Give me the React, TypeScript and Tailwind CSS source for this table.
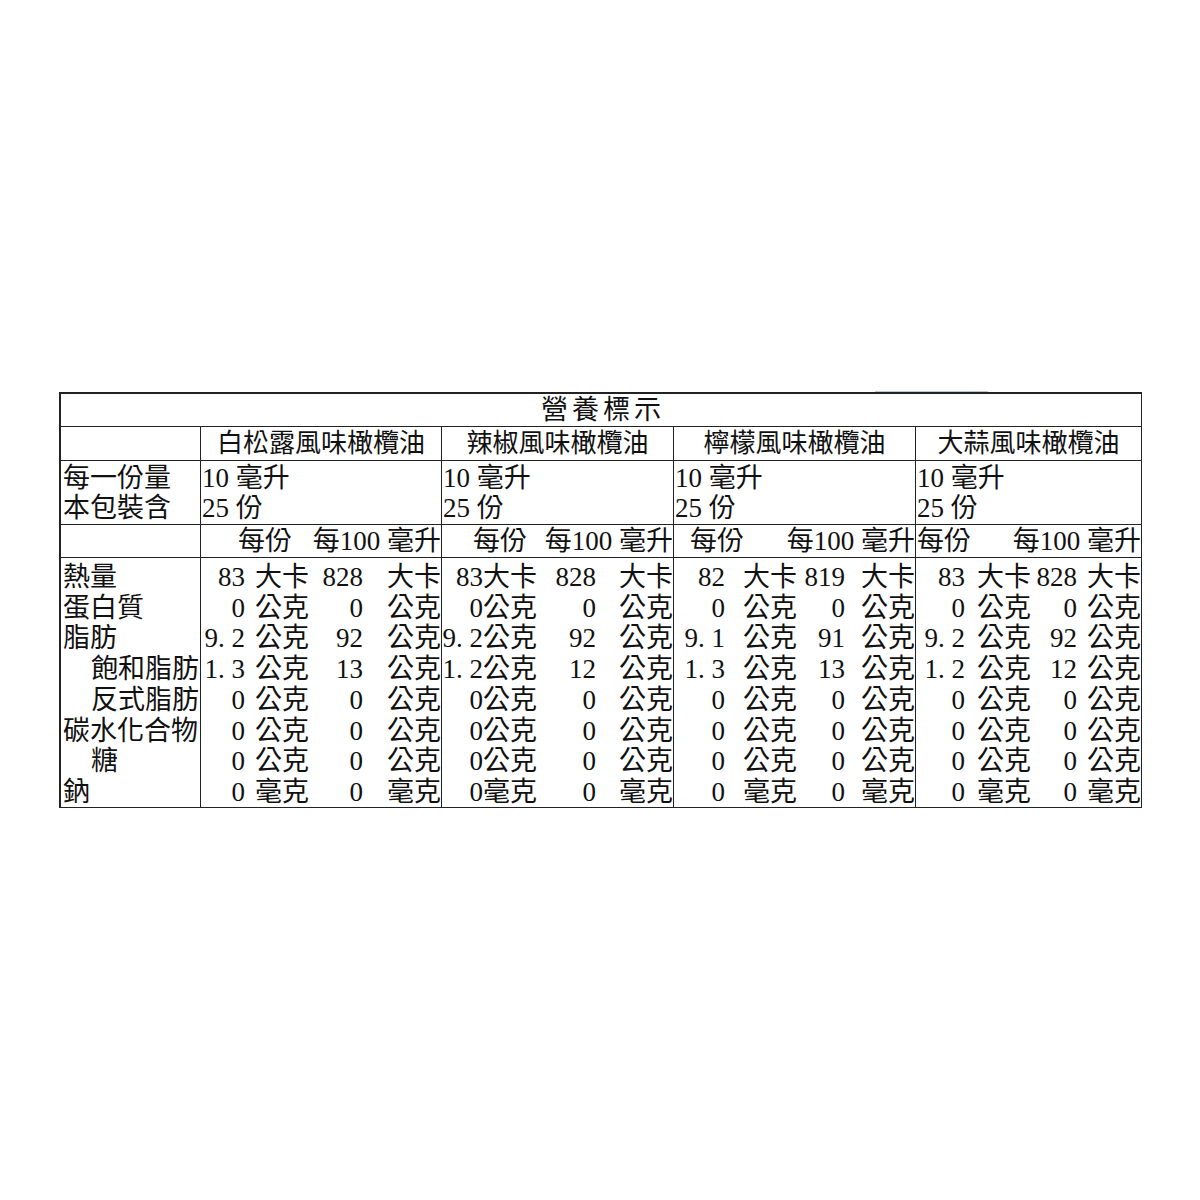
const FONT = "font-['Liberation_Serif','Noto_Sans_CJK_TC',serif]";

type Col = {
  name: string;
  perPad: string;
  a: string;
  u: string;
  n: string;
  rows: [string, string, string, string][];
};

const zeros = (unit: string): [string, string, string, string] => ["0", unit, "0", unit];

const cols: Col[] = [
  {
    name: "白松露風味橄欖油",
    perPad: "pl-[37px]",
    a: "w-[44px]",
    u: "w-[64px] pl-[10px]",
    n: "w-[54px]",
    rows: [
      ["83", "大卡", "828", "大卡"],
      zeros("公克"),
      ["9.2", "公克", "92", "公克"],
      ["1.3", "公克", "13", "公克"],
      zeros("公克"),
      zeros("公克"),
      zeros("公克"),
      zeros("毫克"),
    ],
  },
  {
    name: "辣椒風味橄欖油",
    perPad: "pl-[31px]",
    a: "w-[41px]",
    u: "w-[57px]",
    n: "w-[56px]",
    rows: [
      ["83", "大卡", "828", "大卡"],
      zeros("公克"),
      ["9.2", "公克", "92", "公克"],
      ["1.2", "公克", "12", "公克"],
      zeros("公克"),
      zeros("公克"),
      zeros("公克"),
      zeros("毫克"),
    ],
  },
  {
    name: "檸檬風味橄欖油",
    perPad: "pl-[16px]",
    a: "w-[51px]",
    u: "w-[72px] pl-[18px]",
    n: "w-[48px]",
    rows: [
      ["82", "大卡", "819", "大卡"],
      zeros("公克"),
      ["9.1", "公克", "91", "公克"],
      ["1.3", "公克", "13", "公克"],
      zeros("公克"),
      zeros("公克"),
      zeros("公克"),
      zeros("毫克"),
    ],
  },
  {
    name: "大蒜風味橄欖油",
    perPad: "pl-[1px]",
    a: "w-[49px]",
    u: "w-[62px] pl-[12px]",
    n: "w-[50px]",
    rows: [
      ["83", "大卡", "828", "大卡"],
      zeros("公克"),
      ["9.2", "公克", "92", "公克"],
      ["1.2", "公克", "12", "公克"],
      zeros("公克"),
      zeros("公克"),
      zeros("公克"),
      zeros("毫克"),
    ],
  },
];

const labels: [string, boolean][] = [
  ["熱量", false],
  ["蛋白質", false],
  ["脂肪", false],
  ["飽和脂肪", true],
  ["反式脂肪", true],
  ["碳水化合物", false],
  ["糖", true],
  ["鈉", false],
];

const GRID = "grid grid-cols-[140px_241px_232px_242px_225px]";

// half-width period like the label's Ming font
const Num = ({ v }: { v: string }) => (
  <>
    {v.split("").map((c, i) =>
      c === "." ? (
        <span key={i} className="inline-block w-[0.5em] text-left">
          .
        </span>
      ) : (
        <span key={i}>{c}</span>
      )
    )}
  </>
);

export default function App() {
  return (
    <div className={`w-[1200px] h-[1200px] bg-white pt-[391px] pl-[59px] text-[#111] ${FONT}`}>
      <div className="ml-[816px] w-[113px] h-px bg-[#b9c7d2]" />
      <div className="w-[1083px] border-t-2 border-l-2 border-r border-b border-[#222]">
        {/* title */}
        <div className="h-[33px] border-b border-[#222] flex items-center justify-center text-[27px] tracking-[4px] pl-[4px] leading-none">
          營養標示
        </div>

        {/* product names */}
        <div className={`${GRID} h-[34px] border-b border-[#222]`}>
          <div className="border-r border-[#222]" />
          {cols.map((c, i) => (
            <div
              key={c.name}
              className={`flex items-center justify-center text-[26px] leading-none ${i < 3 ? "border-r border-[#222]" : ""}`}
            >
              {c.name}
            </div>
          ))}
        </div>

        {/* serving */}
        <div className={`${GRID} h-[64px] border-b border-[#222] text-[27px] leading-[30px] pt-[2px]`}>
          <div className="border-r border-[#222] pl-[2px] -mt-[2px] pt-[2px]">
            <div>每一份量</div>
            <div>本包裝含</div>
          </div>
          {cols.map((c, i) => (
            <div key={c.name} className={`pl-[1px] -mt-[2px] pt-[2px] ${i < 3 ? "border-r border-[#222]" : ""}`}>
              <div>10 毫升</div>
              <div>25 份</div>
            </div>
          ))}
        </div>

        {/* per serving header */}
        <div className={`${GRID} h-[33px] border-b border-[#222] text-[27px] leading-none`}>
          <div className="border-r border-[#222]" />
          {cols.map((c, i) => (
            <div
              key={c.name}
              className={`flex items-center justify-between ${c.perPad} ${i < 3 ? "border-r border-[#222]" : ""}`}
            >
              <span>每份</span>
              <span>每100 毫升</span>
            </div>
          ))}
        </div>

        {/* data */}
        <div className={`${GRID} h-[249px] text-[27px] leading-[30.7px]`}>
          <div className="border-r border-[#222] pt-[4px] pl-[2px]">
            {labels.map(([l, indent]) => (
              <div key={l} className={`whitespace-nowrap ${indent ? "pl-[28px]" : ""}`}>
                {l}
              </div>
            ))}
          </div>
          {cols.map((c, i) => (
            <div key={c.name} className={`pt-[4px] ${i < 3 ? "border-r border-[#222]" : ""}`}>
              {c.rows.map((r, j) => (
                <div key={j} className="flex whitespace-nowrap">
                  <span className={`${c.a} shrink-0 text-right`}>
                    <Num v={r[0]} />
                  </span>
                  <span className={`${c.u} shrink-0`}>{r[1]}</span>
                  <span className={`${c.n} shrink-0 text-right`}>
                    <Num v={r[2]} />
                  </span>
                  <span className="flex-1 text-right">{r[3]}</span>
                </div>
              ))}
            </div>
          ))}
        </div>
      </div>
    </div>
  );
}
